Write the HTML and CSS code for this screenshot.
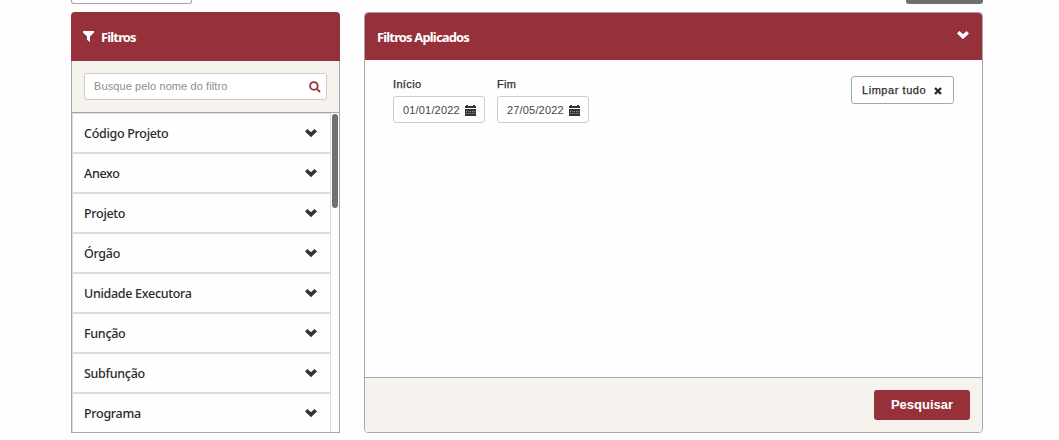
FILE: index.html
```html
<!DOCTYPE html>
<html lang="pt-BR">
<head>
<meta charset="utf-8">
<title>Filtros</title>
<link rel="stylesheet" href="styles.css">
</head>
<body>
<svg class="defs" width="0" height="0" aria-hidden="true">
  <symbol id="chevron" viewBox="0 0 12 8"><path d="M2.4 0 6 3.3 9.6 0 12 2.6 6 8.2 0 2.6Z"/></symbol>
  <symbol id="calendar" viewBox="0 0 11 11"><path fill-rule="evenodd" d="M0 1H1V0H3V1H8V0H10V1H11V3H0ZM0 4H11V11H0Z"/><path class="grid" d="M1 6.5H10M1 8.5H10"/></symbol>
</svg>
<div class="toolbar"><span class="tool-light"></span><span class="tool-dark"></span></div>
<main class="panels">
  <section class="filters">
    <header class="bar">
      <svg class="funnel" viewBox="0 0 11 11"><path d="M0 0H11V1.4L7 5.4V11L4 8.7V5.4L0 1.4Z"/></svg>
      <h2 class="title">Filtros</h2>
    </header>
    <div class="search">
      <label class="search-box">
        <span class="hint">Busque pelo nome do filtro</span>
        <svg class="lens" viewBox="0 0 12 12"><circle cx="4.9" cy="4.9" r="3.8"/><path d="M7.8 7.8 11 11"/></svg>
      </label>
    </div>
    <div class="scroller">
      <ul class="list">
        <li class="item"><span class="name">Código Projeto</span><svg class="chevron"><use href="#chevron"/></svg></li>
        <li class="item"><span class="name">Anexo</span><svg class="chevron"><use href="#chevron"/></svg></li>
        <li class="item"><span class="name">Projeto</span><svg class="chevron"><use href="#chevron"/></svg></li>
        <li class="item"><span class="name">Órgão</span><svg class="chevron"><use href="#chevron"/></svg></li>
        <li class="item"><span class="name">Unidade Executora</span><svg class="chevron"><use href="#chevron"/></svg></li>
        <li class="item"><span class="name">Função</span><svg class="chevron"><use href="#chevron"/></svg></li>
        <li class="item"><span class="name">Subfunção</span><svg class="chevron"><use href="#chevron"/></svg></li>
        <li class="item"><span class="name">Programa</span><svg class="chevron"><use href="#chevron"/></svg></li>
      </ul>
      <div class="track"><div class="thumb"></div></div>
    </div>
  </section>
  <section class="applied">
    <header class="bar bar-applied">
      <h2 class="title">Filtros Aplicados</h2>
      <svg class="chevron"><use href="#chevron"/></svg>
    </header>
    <div class="content">
      <div class="field"><span class="label">Início</span><span class="date">01/01/2022<svg class="calendar"><use href="#calendar"/></svg></span></div>
      <div class="field"><span class="label">Fim</span><span class="date">27/05/2022<svg class="calendar"><use href="#calendar"/></svg></span></div>
      <button class="clear">Limpar tudo<svg class="cross" viewBox="0 0 8 8"><path d="M1 1 7 7M7 1 1 7"/></svg></button>
    </div>
    <footer class="footer"><button class="submit">Pesquisar</button></footer>
  </section>
</main>
</body>
</html>
```
FILE: styles.css
```css
* { box-sizing: border-box; }
body { margin: 0; height: 440px; overflow: hidden; background: #fefefe; color: #2b2b2b; font-family: "Liberation Sans", Arial, sans-serif; }
svg { display: block; flex: none; fill: currentColor; }
.defs { position: absolute; }
.toolbar { display: flex; justify-content: space-between; width: 912px; height: 12px; margin-left: 71px; }
.tool-light { width: 121px; height: 4px; border: 1px solid #a6a6a6; border-top: 0; border-radius: 0 0 3px 3px; background: #fff; }
.tool-dark { width: 77px; height: 4px; border-radius: 0 0 3px 3px; background: #707070; }
.panels { display: flex; gap: 24px; width: 912px; height: 421px; margin-left: 71px; }
.filters { display: flex; flex-direction: column; width: 269px; }
.bar { display: flex; align-items: center; height: 49px; padding: 0 13px 0 12px; flex: none; background: #96313c; color: #fff; border-radius: 4px 4px 0 0; }
.title { margin: 0; font: 700 13px/20px "Noto Sans", "Open Sans", sans-serif; letter-spacing: -.85px; }
.funnel { width: 11px; height: 11px; margin-right: 7px; }
.search { height: 52px; padding: 12px; border: 1px solid #a6a6a6; border-top: 0; background: #f6f2ed; flex: none; }
.search-box { display: flex; align-items: center; justify-content: space-between; height: 27px; padding: 0 5px 0 9px; border: 1px solid #ccc; border-radius: 3px; background: #fff; }
.hint { padding-bottom: 2px; font-size: 11px; letter-spacing: .1px; color: #8d8d8d; }
.lens { width: 12px; height: 12px; fill: none; stroke: #96313c; stroke-width: 1.9; }
.scroller { display: flex; flex: 1; min-height: 0; overflow: hidden; border: solid #a6a6a6; border-width: 0 1px 1px; }
.list { width: 259px; margin: 0; padding: 0; list-style: none; }
.item { display: flex; align-items: center; justify-content: space-between; height: 40px; padding: 0 13px 0 11px; border: 1px solid #dcdcdc; }
.name { padding-top: 2px; font: 500 12.5px/20px "Noto Sans", "Open Sans", sans-serif; letter-spacing: -.3px; }
.chevron { width: 12px; height: 8px; }
.item .chevron { margin-top: -1px; color: #333; }
.track { width: 8px; padding: 1px 1px; }
.thumb { width: 6px; height: 94px; border-radius: 3px; background: #707070; }
.applied { display: flex; flex-direction: column; width: 619px; border: 1px solid #a6a6a6; border-radius: 4px; overflow: hidden; }
.bar-applied { height: 47px; padding: 0 13px 0 12px; justify-content: space-between; border-radius: 3px 3px 0 0; }
.bar-applied .chevron { margin-top: -3px; }
.content { display: flex; align-items: flex-start; gap: 12px; flex: 1; padding: 16px 28px; }
.field { display: flex; flex-direction: column; gap: 4px; }
.label { font-size: 11px; line-height: 16px; letter-spacing: .35px; -webkit-text-stroke: .25px currentColor; }
.date { display: flex; align-items: center; gap: 5px; width: 92px; height: 27px; padding-left: 9px; border: 1px solid #ccc; border-radius: 3px; font-size: 11px; letter-spacing: .17px; background: #fff; color: #444; }
.calendar { width: 11px; height: 11px; margin-top: 1px; color: #333; }
.grid { fill: none; stroke: #9a9290; stroke-width: 1; stroke-dasharray: 1 1; }
button { display: flex; align-items: center; font-family: inherit; }
.clear { width: 103px; height: 28px; margin-left: auto; gap: 8px; padding: 0 0 0 10px; border: 1px solid #a6a6a6; border-radius: 3px; background: #fff; color: #2b2b2b; font-size: 11px; letter-spacing: .55px; -webkit-text-stroke: .25px currentColor; }
.cross { width: 8px; height: 8px; margin-top: 1px; stroke: currentColor; stroke-width: 2.4; }
.footer { display: flex; justify-content: flex-end; align-items: center; height: 55px; padding-right: 12px; border-top: 1px solid #a6a6a6; background: #f6f2ed; flex: none; }
.submit { justify-content: center; width: 96px; height: 30px; padding: 0 0 2px; border: 0; border-radius: 3px; background: #96313c; color: #fff; font-size: 13px; font-weight: 700; }
```
